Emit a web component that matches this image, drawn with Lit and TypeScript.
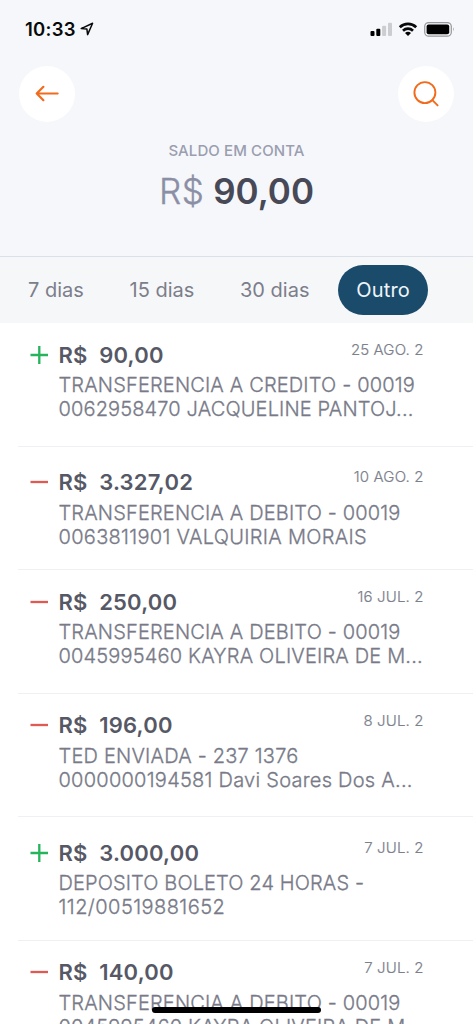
import { LitElement, html, css, svg } from "lit";
import { customElement, property, state } from "lit/decorators.js";
import { classMap } from "lit/directives/class-map.js";

interface Entry {
  credit: boolean;
  low?: boolean;
  amount: string;
  date: string;
  lines: { text: string; tracking: number }[];
}

const line = (text: string, tracking = 0) => ({ text, tracking });

const ENTRIES: Entry[] = [
  { credit: true, amount: "90,00", date: "25 AGO. 2", lines: [line("TRANSFERENCIA A CREDITO - 00019", 0.16), line("0062958470 JACQUELINE PANTOJ...", 0.14)] },
  { credit: false, low: true, amount: "3.327,02", date: "10 AGO. 2", lines: [line("TRANSFERENCIA A DEBITO - 00019", 0.16), line("0063811901 VALQUIRIA MORAIS", 0.3)] },
  { credit: false, amount: "250,00", date: "16 JUL. 2", lines: [line("TRANSFERENCIA A DEBITO - 00019", 0.16), line("0045995460 KAYRA OLIVEIRA DE M...", 0.17)] },
  { credit: false, amount: "196,00", date: "8 JUL. 2", lines: [line("TED ENVIADA - 237 1376", 0.2), line("0000000194581 Davi Soares Dos A...", 0.25)] },
  { credit: true, low: true, amount: "3.000,00", date: "7 JUL. 2", lines: [line("DEPOSITO BOLETO 24 HORAS -", 0.11), line("112/00519881652", 0.45)] },
  { credit: false, amount: "140,00", date: "7 JUL. 2", lines: [line("TRANSFERENCIA A DEBITO - 00019", 0.16), line("0045995460 KAYRA OLIVEIRA DE M...", 0.17)] },
];

@customElement("status-bar")
class StatusBar extends LitElement {
  static styles = css`
    :host { display: flex; justify-content: space-between; height: 60px; padding: 0 18px 0 25px; box-sizing: border-box; color: #08090b; }
    .left { display: flex; align-items: center; gap: 4px; }
    .time { font-size: 18.5px; font-weight: 600; line-height: 58px; height: 60px; letter-spacing: 0.25px; }
    .arrow { margin-top: -2px; }
    svg { display: block; }
  `;
  render() {
    return html`
      <div class="left">
        <span class="time">10:33</span>
        <svg class="arrow" width="14" height="14" viewBox="0 0 14 14">
          <path d="M1.2 6.6 12.6 1.2 7.6 12.6 6.9 7.1Z" fill="none" stroke="currentColor" stroke-width="1.5" stroke-linejoin="round" />
        </svg>
      </div>
      <svg width="86" height="60" viewBox="369 0 86 60">
        <rect x="370.5" y="31" width="4" height="5" rx="1" />
        <rect x="376.3" y="28.7" width="4" height="7.3" rx="1" />
        <rect x="382.1" y="25.8" width="4" height="10.2" rx="1" fill="#cccdd0" />
        <rect x="388" y="22.8" width="4" height="13.2" rx="1" fill="#cccdd0" />
        <g fill="none" stroke="#08090b" stroke-width="2.7">
          <path d="M399.8 27.2a11.8 11.8 0 0 1 16.4 0" />
          <path d="M403 30.7a7.3 7.3 0 0 1 10 0" />
        </g>
        <path d="M405 33.1a4.5 4.5 0 0 1 6 0L408 36Z" />
        <rect x="424.7" y="22.6" width="26.6" height="13.6" rx="4" fill="none" stroke="#96979a" stroke-width="1.2" />
        <rect x="426.6" y="24.4" width="22.6" height="9.8" rx="2" />
        <path d="M453 27.2q1.8 2 0 4.2Z" fill="#96979a" />
      </svg>
    `;
  }
}

@customElement("round-button")
class RoundButton extends LitElement {
  @property() icon = "back";
  static styles = css`
    :host { display: block; }
    .btn { display: grid; place-items: center; width: 56px; height: 56px; border: 0; padding: 0; border-radius: 50%; background: #fff; color: #f26a1b; }
    svg { display: block; fill: none; stroke: currentColor; stroke-linecap: round; stroke-linejoin: round; }
  `;
  render() {
    const glyph = this.icon === "back"
      ? svg`<path d="M10.4 20.2 3.7 13.5 10.4 6.8M4 13.5H24.6" stroke-width="2.2"/>`
      : svg`<circle cx="12.9" cy="12.6" r="10.5" stroke-width="1.9"/><path d="M20.4 20.2 25.6 25.4" stroke-width="1.9"/>`;
    return html`<button class="btn"><svg width="28" height="28" viewBox="0 0 28 28">${glyph}</svg></button>`;
  }
}

@customElement("statement-row")
class StatementRow extends LitElement {
  @property({ attribute: false }) entry!: Entry;
  static styles = css`
    :host { display: block; height: 123.5px; box-sizing: border-box; margin-left: 18px; border-bottom: 1px solid #eff0f3; }
    .row { display: grid; grid-template-columns: 40.5px 1fr auto; padding: 17.5px 49.5px 0 0; }
    .row.low { padding-top: 21.2px; }
    .sign { display: block; margin: 4px 0 0 12px; }
    .plus { stroke: #25b35b; }
    .minus { stroke: #df5a52; }
    .amount { font-size: 22px; font-weight: 600; line-height: 28px; letter-spacing: 0.22px; color: #565866; white-space: pre; }
    .date { padding-top: 0.4px; font-size: 15px; font-weight: 300; line-height: 18px; letter-spacing: 0.12px; color: #7c7f8c; -webkit-text-stroke: 0.2px #7c7f8c; }
    .desc { grid-column: 2 / 4; margin-top: 4.5px; font-size: 20px; font-weight: 300; line-height: 24px; color: #787a88; -webkit-text-stroke: 0.3px #787a88; white-space: nowrap; }
    .line { display: block; }
  `;
  render() {
    const e = this.entry;
    return html`
      <div class=${classMap({ row: true, low: !!e.low })}>
        <svg class="sign ${e.credit ? "plus" : "minus"}" width="20" height="20" viewBox="0 0 20 20" stroke-width="2.3">
          <path d=${e.credit ? "M.5 10H18M9.3 1V19" : "M.5 10H18"} />
        </svg>
        <div class="amount">R$  ${e.amount}</div>
        <div class="date">${e.date}</div>
        <div class="desc">${e.lines.map((l) => html`<span class="line" style="letter-spacing:${l.tracking}px">${l.text}</span>`)}</div>
      </div>
    `;
  }
}

@customElement("app-root")
class AppRoot extends LitElement {
  @state() private selected = "Outro";

  static styles = css`
    :host { display: block; position: relative; height: 1024px; overflow: hidden; background: #fff; font-family: Inter, "Liberation Sans", sans-serif; }
    .header { height: 257px; box-sizing: border-box; background: #f6f7fa; border-bottom: 1px solid #dce0e8; }
    .nav { display: flex; justify-content: space-between; padding: 6px 19px 0; }
    .balance { display: flex; flex-direction: column; align-items: center; padding-top: 20px; }
    .label { font-size: 15px; font-weight: 500; line-height: 18px; letter-spacing: 0.1px; color: #9a9eb0; }
    .value { margin-top: 9px; font-size: 35px; line-height: 44px; font-weight: 600; color: #474957; }
    .currency { font-weight: 300; letter-spacing: 0.5px; color: #8b8fa5; -webkit-text-stroke: 0.4px #8b8fa5; }
    .tabs { display: flex; align-items: center; height: 66.4px; padding: 0 0 0 10px; box-sizing: border-box; background: #f6f7f9; }
    .tab { height: 49.6px; border: 0; border-radius: 25px; padding: 1px 18px 0; margin-right: 9.7px; background: none; font: 400 20px/49px Inter, "Liberation Sans", sans-serif; color: #7c7e8b; white-space: nowrap; }
    .tab.active { margin-left: 1px; letter-spacing: 0.2px; background: #1b4b6b; color: #eef5fa; }
    .home { position: absolute; left: 152px; top: 1007px; width: 169px; height: 6px; border-radius: 3px; background: #000; }
  `;

  render() {
    return html`
      <div class="header">
        <status-bar></status-bar>
        <div class="nav">
          <round-button icon="back"></round-button>
          <round-button icon="search"></round-button>
        </div>
        <div class="balance">
          <div class="label">SALDO EM CONTA</div>
          <div class="value"><span class="currency">R$</span> 90,00</div>
        </div>
      </div>
      <div class="tabs">
        ${["7 dias", "15 dias", "30 dias", "Outro"].map(
          (t) => html`<button class=${classMap({ tab: true, active: t === this.selected })} @click=${() => (this.selected = t)}>${t}</button>`
        )}
      </div>
      <div class="list">${ENTRIES.map((e) => html`<statement-row .entry=${e}></statement-row>`)}</div>
      <div class="home"></div>
    `;
  }
}
